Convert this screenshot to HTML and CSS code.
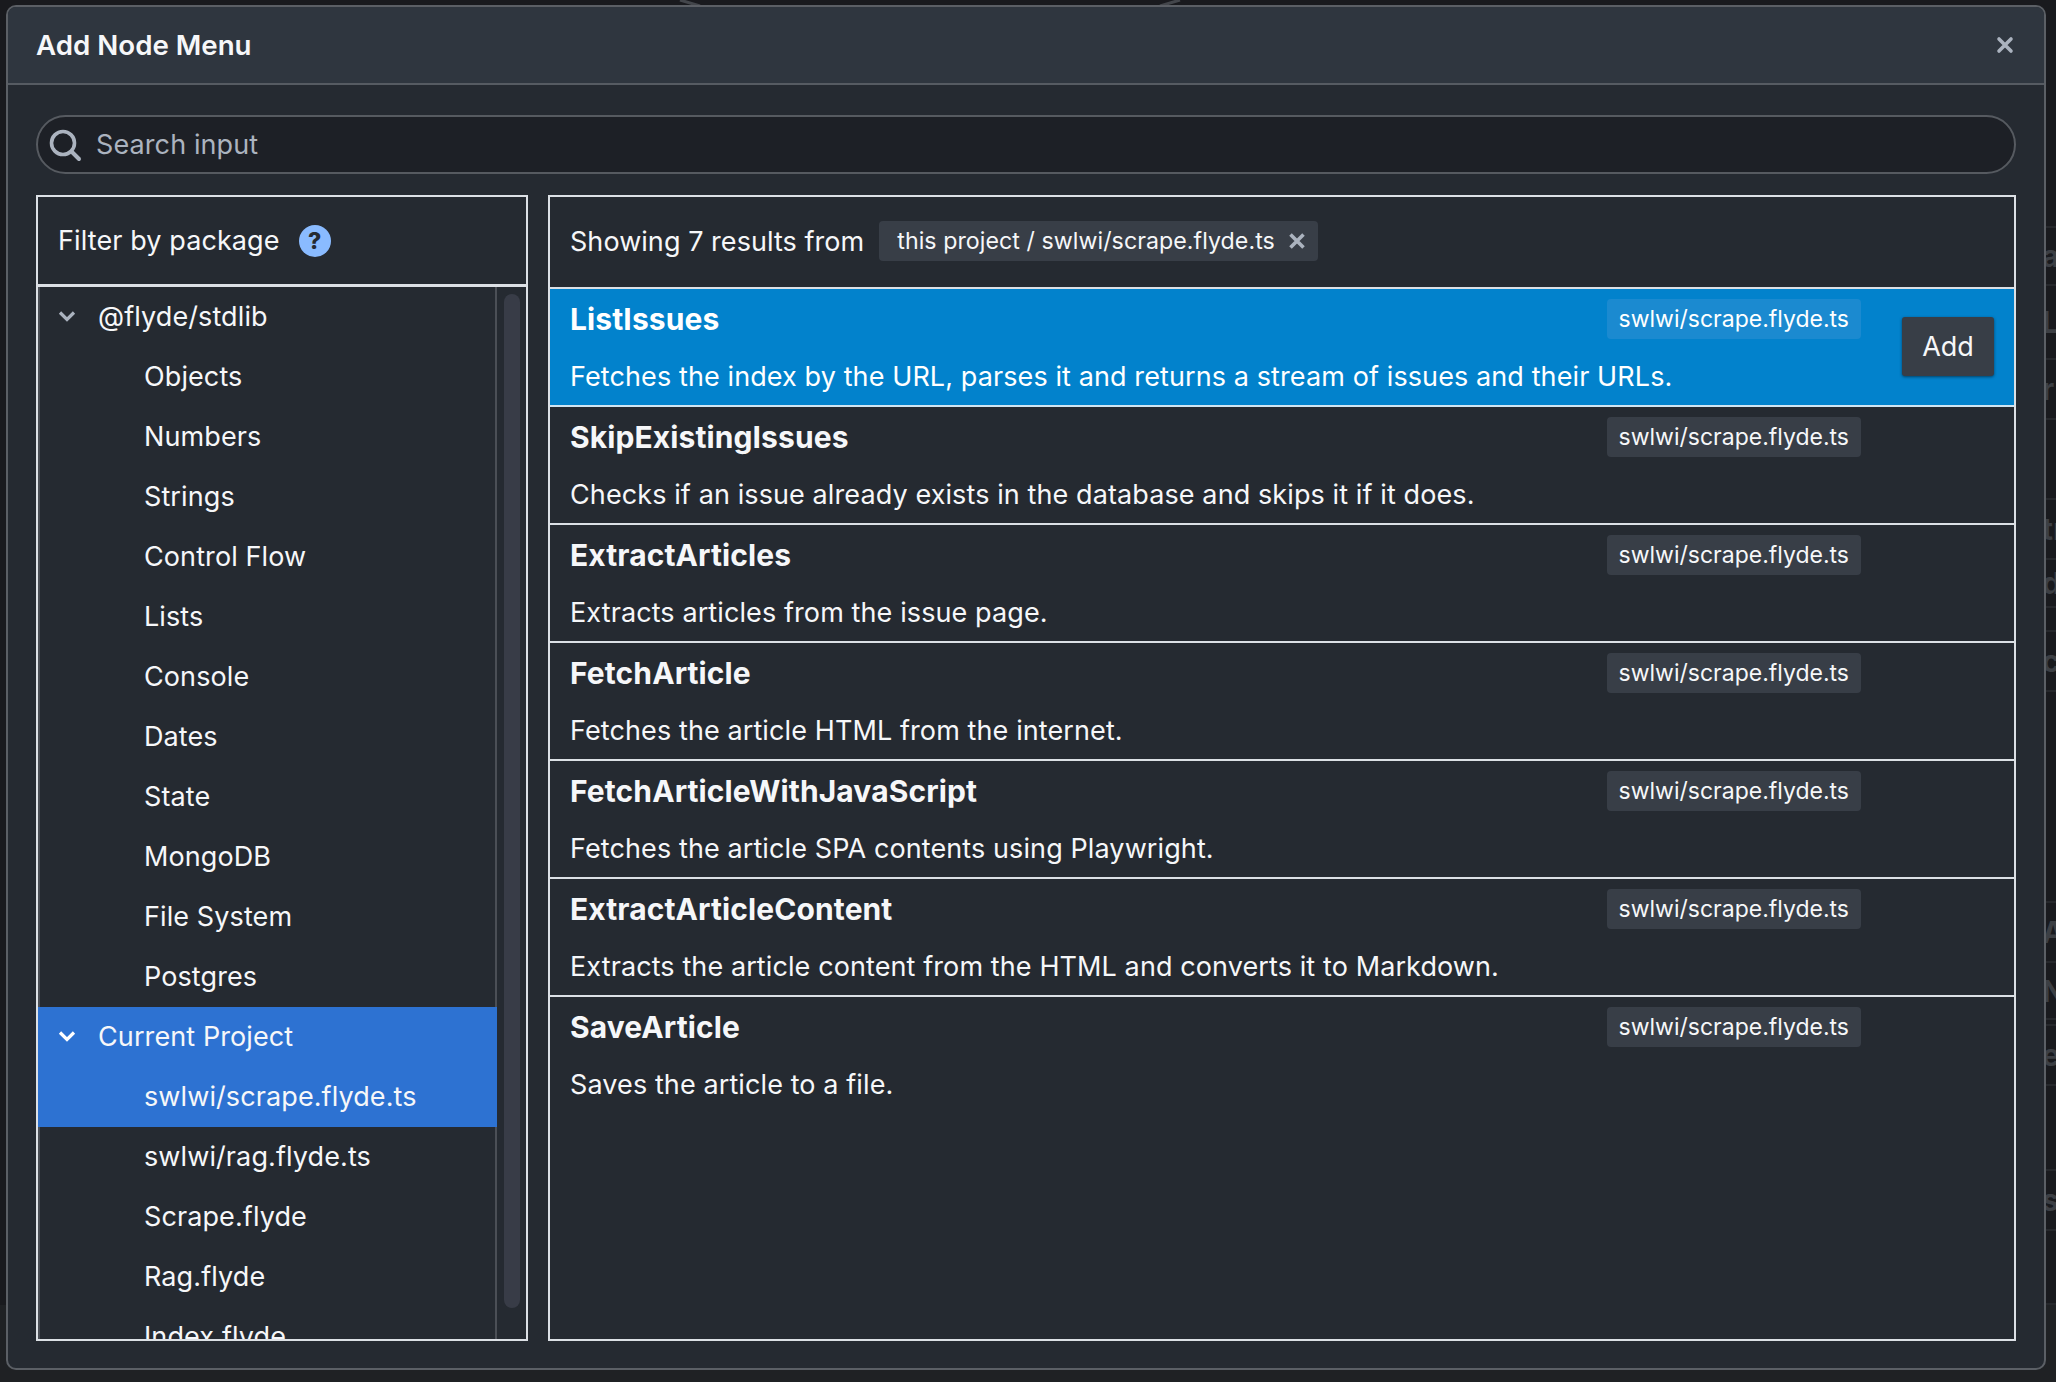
FILE: index.html
```html
<!DOCTYPE html>
<html lang="en">
<head>
    <meta charset="UTF-8">
    <meta name="viewport" content="width=device-width, initial-scale=1.0">
    <title>Add Node Menu</title>
    <link rel="stylesheet" href="styles.css">
</head>
<body>
    <!-- canvas behind the dialog, only its edges show -->
    <svg class="canvas-arc" width="2056" height="6" viewBox="0 0 2056 6">
        <path d="M680 0 L700 6 M1180 0 L1160 6" fill="none" stroke="#43464b" stroke-width="3"/>
    </svg>
    <div class="canvas-strip">
        <span></span><span>a</span><span>Li</span><span>r</span><span></span><span>tr</span><span>di</span><span></span><span>c</span><span></span><span>At</span><span>N</span><span></span><span>e</span><span></span><span>st</span><span></span>
    </div>
    <div class="canvas-floor"></div>

    <div class="dialog">
        <header class="dialog-header">
            <h1>Add Node Menu</h1>
            <svg class="close-icon" width="18" height="18" viewBox="0 0 18 18">
                <path d="M3 3 L15 15 M15 3 L3 15" stroke="#abb3bf" stroke-width="3.6" stroke-linecap="round"/>
            </svg>
        </header>
        <div class="dialog-body">
            <div class="search">
                <svg width="34" height="34" viewBox="0 0 34 34">
                    <circle cx="15" cy="15" r="11.5" fill="none" stroke="#abb3bf" stroke-width="3.6"/>
                    <path d="M24 24 L31 31" stroke="#abb3bf" stroke-width="4" stroke-linecap="round"/>
                </svg>
                <span>Search input</span>
            </div>
            <div class="columns">
                <section class="packages">
                    <div class="packages-title">
                        <span>Filter by package</span>
                        <span class="help">?</span>
                    </div>
                    <div class="tree-wrap">
                        <ul class="tree">
                            <li class="parent">
                                <svg width="20" height="20" viewBox="0 0 20 20"><path d="M3 6.5 L10 13.5 L17 6.5" fill="none" stroke="#abb3bf" stroke-width="3.2"/></svg>
                                @flyde/stdlib
                            </li>
                            <li>Objects</li>
                            <li>Numbers</li>
                            <li>Strings</li>
                            <li>Control Flow</li>
                            <li>Lists</li>
                            <li>Console</li>
                            <li>Dates</li>
                            <li>State</li>
                            <li>MongoDB</li>
                            <li>File System</li>
                            <li>Postgres</li>
                            <li class="parent selected">
                                <svg width="20" height="20" viewBox="0 0 20 20"><path d="M3 6.5 L10 13.5 L17 6.5" fill="none" stroke="#fff" stroke-width="3.2"/></svg>
                                Current Project
                            </li>
                            <li class="selected">swlwi/scrape.flyde.ts</li>
                            <li>swlwi/rag.flyde.ts</li>
                            <li>Scrape.flyde</li>
                            <li>Rag.flyde</li>
                            <li>Index.flyde</li>
                        </ul>
                        <div class="scroll-track"><div class="scroll-thumb"></div></div>
                    </div>
                </section>
                <section class="results">
                    <div class="results-title">
                        <span>Showing 7 results from</span>
                        <span class="chip">
                            this project / swlwi/scrape.flyde.ts
                            <svg width="16" height="16" viewBox="0 0 16 16"><path d="M1.5 1.5 L14.5 14.5 M14.5 1.5 L1.5 14.5" stroke="#abb3bf" stroke-width="3.6"/></svg>
                        </span>
                    </div>
                    <div class="result active">
                        <div class="result-head">
                            <strong>ListIssues</strong>
                            <span class="tag">swlwi/scrape.flyde.ts</span>
                        </div>
                        <p>Fetches the index by the URL, parses it and returns a stream of issues and their URLs.</p>
                        <button class="add-button">Add</button>
                    </div>
                    <div class="result">
                        <div class="result-head">
                            <strong>SkipExistingIssues</strong>
                            <span class="tag">swlwi/scrape.flyde.ts</span>
                        </div>
                        <p>Checks if an issue already exists in the database and skips it if it does.</p>
                    </div>
                    <div class="result">
                        <div class="result-head">
                            <strong>ExtractArticles</strong>
                            <span class="tag">swlwi/scrape.flyde.ts</span>
                        </div>
                        <p>Extracts articles from the issue page.</p>
                    </div>
                    <div class="result">
                        <div class="result-head">
                            <strong>FetchArticle</strong>
                            <span class="tag">swlwi/scrape.flyde.ts</span>
                        </div>
                        <p>Fetches the article HTML from the internet.</p>
                    </div>
                    <div class="result">
                        <div class="result-head">
                            <strong>FetchArticleWithJavaScript</strong>
                            <span class="tag">swlwi/scrape.flyde.ts</span>
                        </div>
                        <p>Fetches the article SPA contents using Playwright.</p>
                    </div>
                    <div class="result">
                        <div class="result-head">
                            <strong>ExtractArticleContent</strong>
                            <span class="tag">swlwi/scrape.flyde.ts</span>
                        </div>
                        <p>Extracts the article content from the HTML and converts it to Markdown.</p>
                    </div>
                    <div class="result last">
                        <div class="result-head">
                            <strong>SaveArticle</strong>
                            <span class="tag">swlwi/scrape.flyde.ts</span>
                        </div>
                        <p>Saves the article to a file.</p>
                    </div>
                </section>
            </div>
        </div>
    </div>
</body>
</html>
```

FILE: styles.css
```css
* {
    box-sizing: border-box;
}
html, body {
    margin: 0;
    padding: 0;
    height: 100%;
    overflow: hidden;
}
body {
    position: relative;
    font-family: Inter, "Noto Sans", sans-serif;
    font-size: 27px;
    letter-spacing: 0.1px;
    color: #f6f7f9;
    background-color: #191a1e;
    padding: 5px 0 0 6px;
}

/* bits of canvas that stick out around the dialog */
.canvas-arc {
    position: absolute;
    top: 0;
    left: 0;
}
.canvas-strip {
    position: absolute;
    top: 0;
    right: 0;
    width: 14px;
    height: 1305px;
    display: grid;
    grid-template-rows: 228px 58px 74px 60px 80px 60px 48px 24px 60px 211px 60px 57px 6px 60px 85px 60px 74px;
    font-weight: 700;
    font-size: 30px;
    color: #3c3f44;
    overflow: hidden;
}
.canvas-strip span {
    display: flex;
    align-items: center;
    border-bottom: 2px solid #26282c;
}
.canvas-floor {
    position: absolute;
    top: 1305px;
    right: 0;
    left: 0;
    bottom: 0;
    background-color: #1f2124;
}

.dialog {
    position: relative;
    width: 2040px;
    height: 1365px;
    border: 2px solid #5b5f65;
    border-radius: 10px;
    background-color: #252a31;
    overflow: hidden;
}
.dialog-header {
    display: flex;
    align-items: center;
    justify-content: space-between;
    height: 78px;
    padding: 0 30px 0 28px;
    background-color: #2f363f;
    border-bottom: 2px solid #565b62;
}
.dialog-header h1 {
    margin: 0;
    font-size: 27.7px;
    font-weight: 600;
    letter-spacing: 0;
}
.dialog-body {
    padding: 30px 28px 0;
}

.search {
    display: flex;
    align-items: center;
    gap: 14px;
    height: 59px;
    padding-left: 10px;
    background-color: #1d2026;
    border: 2px solid #565a60;
    border-radius: 30px;
    color: #abb3bf;
}

.columns {
    display: flex;
    gap: 20px;
    margin-top: 21px;
    height: 1146px;
}

.packages {
    display: flex;
    flex-direction: column;
    width: 492px;
    border: 2px solid #dce0e5;
}
.packages-title {
    display: flex;
    align-items: center;
    gap: 19px;
    flex: none;
    height: 90px;
    padding-left: 20px;
    border-bottom: 3px solid #dce0e5;
}
.help {
    display: flex;
    align-items: center;
    justify-content: center;
    width: 32px;
    height: 32px;
    border-radius: 50%;
    background-color: #8abbff;
    color: #252a31;
    font-size: 23px;
    font-weight: 800;
}
.tree-wrap {
    display: flex;
    flex: 1;
    min-height: 0;
    overflow: hidden;
}
.tree {
    flex: 1;
    margin: 0;
    padding: 0;
    list-style: none;
    border-left: 2px solid #4b4f56;
    border-right: 2px solid #4b4f56;
}
.tree li {
    display: flex;
    align-items: center;
    height: 60px;
    padding-bottom: 2px;
    padding-left: 104px;
    white-space: nowrap;
}
.tree li.parent {
    padding-left: 17px;
    gap: 21px;
}
.tree li.selected {
    background-color: #2d72d2;
    margin: 0 -2px;
}
.tree li.selected:not(.parent) {
    padding-left: 106px;
}
.tree li.parent.selected {
    padding-left: 19px;
}
.scroll-track {
    flex: none;
    width: 29px;
    padding: 7px 6px 0 7px;
}
.scroll-thumb {
    height: 1014px;
    border-radius: 9px;
    background-color: #383c47;
}

.results {
    flex: 1;
    min-width: 0;
    border: 2px solid #dce0e5;
}
.results-title {
    display: flex;
    align-items: center;
    gap: 15px;
    height: 92px;
    padding: 0 0 2px 20px;
    border-bottom: 2px solid #dce0e5;
    letter-spacing: 0.05px;
}
.chip {
    display: flex;
    align-items: center;
    gap: 14px;
    height: 40px;
    padding: 0 13px 0 18px;
    background-color: #383e47;
    border-radius: 4px;
    font-size: 23.2px;
}
.result {
    position: relative;
    height: 118px;
    padding: 10px 20px 0;
    border-bottom: 2px solid #dce0e5;
}
.result.last {
    border-bottom: none;
}
.result.active {
    background-color: #0282cc;
    border-bottom-color: #cfe5f2;
    color: #fff;
}
.result-head {
    display: flex;
    align-items: center;
    justify-content: space-between;
    height: 40px;
    margin-right: 133px;
}
.result-head strong {
    font-size: 30px;
    font-weight: 700;
}
.tag {
    display: flex;
    align-items: center;
    height: 40px;
    padding: 0 12px;
    background-color: #383e47;
    border-radius: 4px;
    font-size: 23px;
    letter-spacing: 0;
}
.result.active .tag {
    background-color: #1b8ad0;
}
.result p {
    margin: 22px 0 0;
    line-height: 32px;
}
.add-button {
    position: absolute;
    top: 28px;
    right: 20px;
    width: 92px;
    height: 59px;
    border: none;
    border-radius: 3px;
    background-color: #383e47;
    box-shadow: 0 1px 3px rgba(0, 0, 0, 0.5);
    color: #f6f7f9;
    font-family: inherit;
    font-size: 27px;
    cursor: pointer;
}
```
